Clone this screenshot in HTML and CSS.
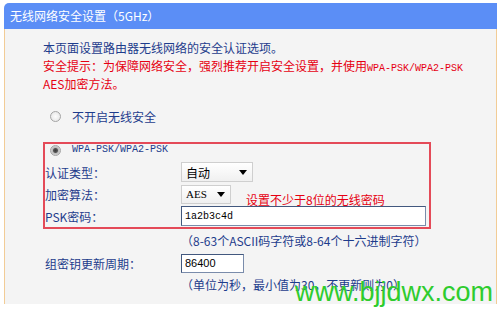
FILE: index.html
```html
<html>
    <head>
        <meta charset="utf-8">
        <link rel="stylesheet" href="styles.css">
    </head>
    <body>
        <div class="panel">
            <div class="title">无线网络安全设置（5GHz）</div>
            <div class="content">
                <p class="intro">本页面设置路由器无线网络的安全认证选项。</p>
                <p class="warn">安全提示：为保障网络安全，强烈推荐开启安全设置，并使用<span class="mono">WPA-PSK/WPA2-PSK</span><br>AES加密方法。</p>
                <div class="radio-row"><span class="radio"></span>不开启无线安全</div>
                <div class="psk-box">
                    <div class="radio-row small"><span class="radio on"></span><span class="mono">WPA-PSK/WPA2-PSK</span></div>
                    <div class="row first">
                        <span class="label">认证类型：</span>
                        <span class="select wide">自动<svg width="8" height="5" viewBox="0 0 8 5"><path d="M0 0H8L4 5Z" fill="#000"/></svg></span>
                    </div>
                    <div class="row">
                        <span class="label">加密算法：</span>
                        <span class="select narrow"><span class="serif">AES</span><svg width="8" height="5" viewBox="0 0 8 5"><path d="M0 0H8L4 5Z" fill="#000"/></svg></span>
                        <span class="note">设置不少于8位的无线密码</span>
                    </div>
                    <div class="row">
                        <span class="label">PSK密码：</span>
                        <input class="text psk" value="1a2b3c4d">
                    </div>
                </div>
                <p class="hint">（8-63个ASCII码字符或8-64个十六进制字符）</p>
                <div class="row outer">
                    <span class="label">组密钥更新周期：</span>
                    <input class="text period" value="86400">
                </div>
                <p class="hint">（单位为秒，最小值为30，不更新则为0）</p>
            </div>
            <div class="watermark">www.bjjdwx.com</div>
        </div>
    </body>
</html>
```
FILE: styles.css
```css
body{
    margin: 0;
    background: #fff;
    font-family: "Noto Sans CJK SC", "Liberation Sans", sans-serif;
    font-size: 12px;
    color: #1e3c8c;
}
.panel{
    position: relative;
    width: 493px;
    margin: 3px 0 0 4px;
}
.title{
    height: 26px;
    line-height: 26px;
    padding-left: 6px;
    background: #5b8ef6;
    border-radius: 5px 0 0 0;
    color: #fff;
}
.content{
    background: #f4f4f4;
    border-left: 1px solid #f2cc96;
    border-right: 1px solid #f2cc96;
    padding: 10px 0 10px 38px;
}
p{
    margin: 0;
    height: auto;
    line-height: 18px;
}
.warn{
    color: #e60012;
}
.mono{
    font-family: "Liberation Mono", monospace;
    font-size: 10px;
    line-height: 10px;
}
.radio-row{
    display: flex;
    align-items: center;
    height: 20px;
    margin-top: 13px;
    padding-left: 7px;
    gap: 11px;
}
.radio{
    width: 11px;
    height: 11px;
    box-sizing: border-box;
    border: 1px solid #a4a4a4;
    border-radius: 50%;
    background: radial-gradient(circle, #fdfdfd 0, #e2e2e2 100%);
}
.radio.on{
    background: radial-gradient(circle, #3a3a3a 0, #555 2px, #bdbdbd 3px, #eaeaea 100%);
}
.psk-box{
    width: 388px;
    box-sizing: border-box;
    margin-top: 16px;
    border: 2px solid #e44a58;
}
.radio-row.small{
    height: 12px;
    margin-top: 0;
    padding-left: 5px;
    gap: 11px;
}
.row{
    display: flex;
    align-items: center;
    height: 22px;
}
.row.first{
    margin-top: 5px;
}
.label{
    width: 136px;
    flex: none;
}
.select{
    display: flex;
    align-items: center;
    justify-content: space-between;
    box-sizing: border-box;
    height: 20px;
    padding: 0 5px 0 4px;
    border: 1px solid #cfcfcf;
    background: linear-gradient(#ffffff, #f0f0f0);
    color: #000;
}
.select.wide{
    width: 72px;
}
.select.narrow{
    width: 50px;
    height: 19px;
}
.serif{
    font-family: "Liberation Serif", serif;
    font-size: 11px;
}
.note{
    margin: 10px 0 0 15px;
    color: #e60012;
}
.text{
    box-sizing: border-box;
    height: 20px;
    padding: 0 3px;
    border: 1px solid #7a8cab;
    border-top-color: #42587e;
    border-left-color: #42587e;
    background: #fff;
    color: #000;
    outline: none;
}
.psk{
    width: 245px;
    font-family: "Liberation Mono", monospace;
    font-size: 10px;
}
.period{
    width: 63px;
    height: 19px;
    font-family: "Liberation Sans", sans-serif;
    font-size: 11px;
}
.hint{
    margin: 3px 0 0 138px;
}
.row.outer{
    height: 20px;
    margin-top: 3px;
    padding-left: 2px;
}
.watermark{
    position: absolute;
    left: 291px;
    top: 276px;
    font-family: "Liberation Sans", sans-serif;
    font-size: 27px;
    line-height: 27px;
    color: #2ecc2e;
}
```
